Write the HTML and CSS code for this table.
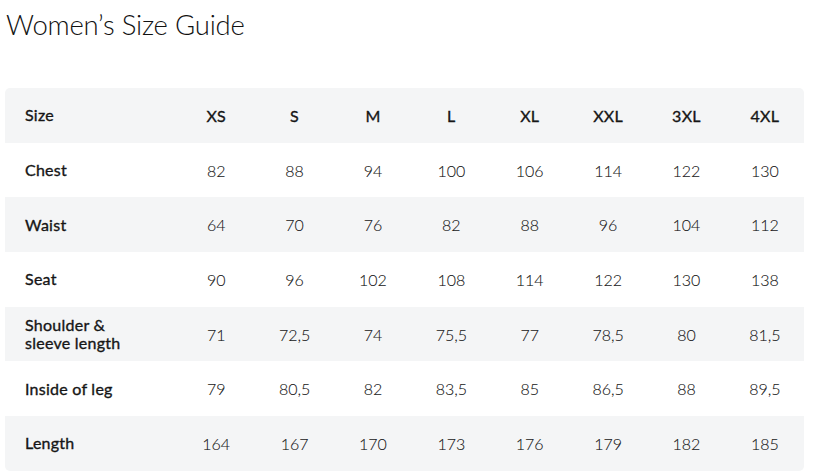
FILE: index.html
```html
<!DOCTYPE html>
<html>
<head>
<meta charset="utf-8">
<link rel="stylesheet" href="styles.css">
</head>
<body>
<h1 class="title">Women’s Size Guide</h1>
<table class="guide">
  <thead>
    <tr><th class="label">Size</th><th>XS</th><th>S</th><th>M</th><th>L</th><th>XL</th><th>XXL</th><th>3XL</th><th>4XL</th></tr>
  </thead>
  <tbody>
    <tr><th class="label">Chest</th><td>82</td><td>88</td><td>94</td><td>100</td><td>106</td><td>114</td><td>122</td><td>130</td></tr>
    <tr><th class="label">Waist</th><td>64</td><td>70</td><td>76</td><td>82</td><td>88</td><td>96</td><td>104</td><td>112</td></tr>
    <tr><th class="label">Seat</th><td>90</td><td>96</td><td>102</td><td>108</td><td>114</td><td>122</td><td>130</td><td>138</td></tr>
    <tr><th class="label">Shoulder &amp;<br>sleeve length</th><td>71</td><td>72,5</td><td>74</td><td>75,5</td><td>77</td><td>78,5</td><td>80</td><td>81,5</td></tr>
    <tr><th class="label">Inside of leg</th><td>79</td><td>80,5</td><td>82</td><td>83,5</td><td>85</td><td>86,5</td><td>88</td><td>89,5</td></tr>
    <tr><th class="label">Length</th><td>164</td><td>167</td><td>170</td><td>173</td><td>176</td><td>179</td><td>182</td><td>185</td></tr>
  </tbody>
</table>
</body>
</html>
```
FILE: styles.css
```css
html, body {
  margin: 0;
  padding: 0;
  background: #ffffff;
}
body {
  font-family: Lato, "Noto Sans", sans-serif;
  color: #161616;
  padding: 0 9px 0 5px;
}
.title {
  margin: 0;
  padding: 9px 0 0 1px;
  font-weight: 300;
  font-size: 27.5px;
  line-height: 32px;
  letter-spacing: -0.2px;
  color: #111;
}
.guide {
  margin-top: 47px;
  width: 799px;
  border-collapse: separate;
  border-spacing: 0;
  table-layout: fixed;
  font-size: 16px;
}
.guide tr {
  height: 54.7px;
}
.guide thead tr,
.guide tbody tr:nth-child(even) {
  background: #f4f5f6;
}
.guide th, .guide td {
  padding: 0;
  text-align: center;
  vertical-align: middle;
}
.guide th {
  font-weight: 400;
  letter-spacing: 0.25px;
  -webkit-text-stroke: 0.35px #161616;
}
.guide td {
  font-weight: 300;
  -webkit-text-stroke: 0.1px #161616;
}
.guide .label {
  width: 172px;
  text-align: left;
  padding-left: 20px;
  box-sizing: border-box;
  line-height: 18px;
}
.guide tbody tr:last-child th { border-bottom-left-radius: 5px; }
.guide tbody tr:last-child td:last-child { border-bottom-right-radius: 5px; }
.guide thead th:first-child { border-top-left-radius: 5px; }
.guide thead th:last-child { border-top-right-radius: 5px; }
```
